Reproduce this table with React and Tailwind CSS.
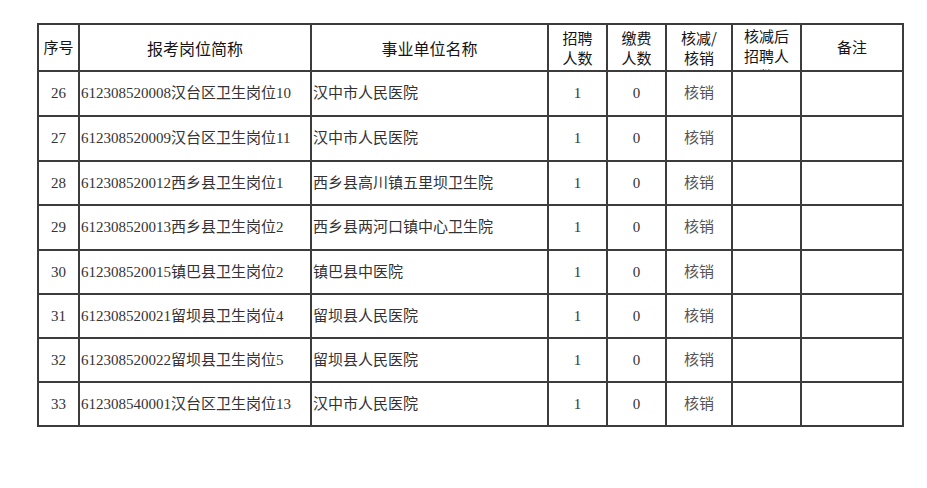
import React from "react";

const rows = [
  ["26", "612308520008汉台区卫生岗位10", "汉中市人民医院"],
  ["27", "612308520009汉台区卫生岗位11", "汉中市人民医院"],
  ["28", "612308520012西乡县卫生岗位1", "西乡县高川镇五里坝卫生院"],
  ["29", "612308520013西乡县卫生岗位2", "西乡县两河口镇中心卫生院"],
  ["30", "612308520015镇巴县卫生岗位2", "镇巴县中医院"],
  ["31", "612308520021留坝县卫生岗位4", "留坝县人民医院"],
  ["32", "612308520022留坝县卫生岗位5", "留坝县人民医院"],
  ["33", "612308540001汉台区卫生岗位13", "汉中市人民医院"],
];

const rowH = ["h-[45px]", "h-[45px]", "h-[44px]", "h-[45px]", "h-[44px]", "h-[44px]", "h-[44px]", "h-[44px]"];

const cell = "border-r-2 border-b-2 border-[#3c3c3c] flex items-center overflow-hidden";
const serif = "font-['Liberation_Serif','Noto_Sans_CJK_SC',serif]";
const sans = "font-['Noto_Sans_CJK_SC',sans-serif]";

export default function App() {
  return (
    <div className="w-[927px] h-[488px] bg-white pt-[23px] pl-[37px]">
      <div className="grid grid-cols-[41px_232px_237px_59px_59px_66px_69px_102px] border-t-2 border-l-2 border-[#3c3c3c] w-[867px]">
        {/* header */}
        <div className={`${cell} h-[47px] justify-center ${sans} text-[15px] text-[#151515]`}>序号</div>
        <div className={`${cell} h-[47px] justify-center ${sans} text-[16px] text-[#151515]`}>报考岗位简称</div>
        <div className={`${cell} h-[47px] justify-center ${sans} text-[16px] text-[#151515]`}>事业单位名称</div>
        <div className={`${cell} h-[47px] justify-center ${sans} text-[15px] leading-[20px] text-[#151515] text-center`}>
          <div>招聘<br />人数</div>
        </div>
        <div className={`${cell} h-[47px] justify-center ${sans} text-[15px] leading-[20px] text-[#151515] text-center`}>
          <div>缴费<br />人数</div>
        </div>
        <div className={`${cell} h-[47px] justify-center ${sans} text-[15px] leading-[20px] text-[#151515] text-center`}>
          <div>核减/<br />核销</div>
        </div>
        <div className={`border-r-2 border-b-2 border-[#3c3c3c] h-[47px] overflow-hidden ${sans} text-[15px] leading-[20px] text-[#151515] text-center pt-[1px]`}>
          核减后<br />招聘人<br />数
        </div>
        <div className={`${cell} h-[47px] justify-center ${sans} text-[15px] text-[#151515]`}>备注</div>

        {rows.map((r, i) => (
          <React.Fragment key={r[0]}>
            <div className={`${cell} ${rowH[i]} justify-center ${serif} text-[15px] text-[#333]`}>{r[0]}</div>
            <div className={`${cell} ${rowH[i]} pl-[1px] ${serif} text-[15px] text-[#333] whitespace-nowrap`}>{r[1]}</div>
            <div className={`${cell} ${rowH[i]} pl-[1px] ${serif} text-[15px] text-[#333] whitespace-nowrap`}>{r[2]}</div>
            <div className={`${cell} ${rowH[i]} justify-center ${serif} text-[15px] text-[#333]`}>1</div>
            <div className={`${cell} ${rowH[i]} justify-center ${serif} text-[15px] text-[#333]`}>0</div>
            <div className={`${cell} ${rowH[i]} justify-center ${serif} text-[15px] text-[#555]`}>核销</div>
            <div className={`${cell} ${rowH[i]}`}></div>
            <div className={`${cell} ${rowH[i]}`}></div>
          </React.Fragment>
        ))}
      </div>
    </div>
  );
}
